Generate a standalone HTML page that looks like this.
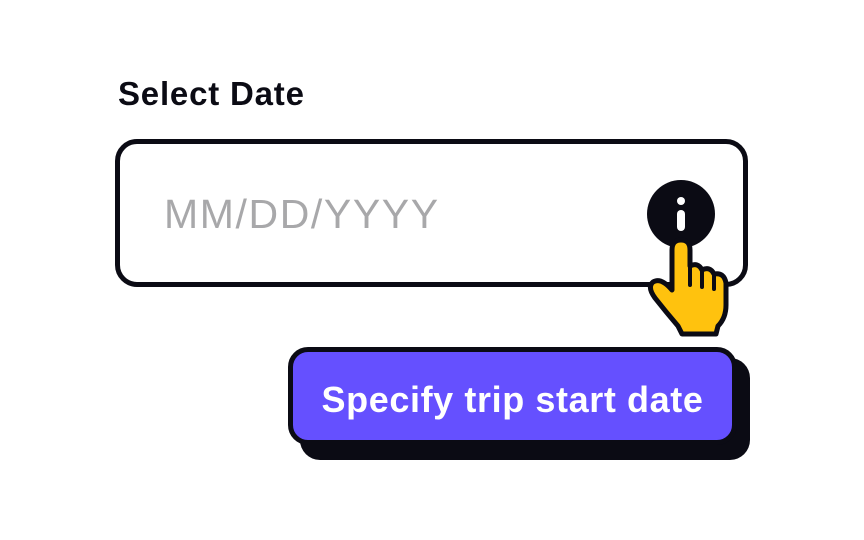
<!DOCTYPE html>
<html><head><style>
body{margin:0;width:864px;height:540px;background:#fff;position:relative;overflow:hidden;font-family:"Liberation Sans",sans-serif}
.lbl{position:absolute;left:118px;top:75px;font-size:33px;font-weight:bold;color:#0b0b14;letter-spacing:0.8px}
.inp{position:absolute;left:115px;top:139px;border:5px solid #0b0b14;border-radius:22px;box-sizing:content-box;width:623px;height:138px}
.ph{position:absolute;left:164px;top:191px;font-size:41px;color:#a8a8aa;letter-spacing:1.6px}
.sh{position:absolute;left:300px;top:358px;width:450px;height:102px;background:#0b0b14;border-radius:20px}
.btn{position:absolute;left:288px;top:347px;width:439px;height:88px;background:#6550ff;border:5px solid #0b0b14;border-radius:20px;color:#fff;font-size:36px;font-weight:bold;text-align:center;line-height:96px;letter-spacing:0.6px;white-space:nowrap}
</style></head><body>
<div class="lbl">Select Date</div>
<div class="inp"></div>
<div class="ph">MM/DD/YYYY</div>
<div class="sh"></div>
<div class="btn">Specify trip start date</div>
<svg style="position:absolute;left:0;top:0" width="864" height="540">
<circle cx="681" cy="214" r="34" fill="#0b0b14"/>
<circle cx="681" cy="201" r="4" fill="#fff"/>
<rect x="677" y="210" width="8" height="21" rx="4" fill="#fff"/>
<path d="M672 250 Q672 240 681 240 Q690 240 690 250 L690 266 Q698 262 702 270 Q710 266 714 274 Q724 272 726 283 L726 305 Q726 318 718 326 L716 334 L682 334 L678 326 Q666 312 655 298 Q647 287 653 282 Q661 277 672 290 Z" fill="#ffc20e" stroke="#0b0b14" stroke-width="5" stroke-linejoin="round"/>
<path d="M690 266 L690 285 M702 270 L702 287 M714 274 L714 289" stroke="#0b0b14" stroke-width="4" stroke-linecap="round"/>
</svg>
</body></html>
